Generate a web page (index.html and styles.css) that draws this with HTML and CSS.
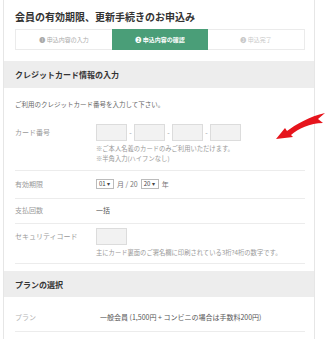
FILE: index.html
```html
<!DOCTYPE html>
<html lang="ja">
<head>
<meta charset="UTF-8">
<meta name="viewport" content="width=device-width, initial-scale=1.0">
<title>会員の有効期限、更新手続きのお申込み</title>
<link rel="stylesheet" href="styles.css">
</head>
<body>

<div class="card">
  <div class="card-top">
    <h1 class="page-title">会員の有効期限、更新手続きのお申込み</h1>
    <div class="steps">
      <div class="step step-done">❶ 申込内容の入力</div>
      <div class="step step-active">❷ 申込内容の確認</div>
      <div class="step step-next">❸ 申込完了</div>
    </div>
  </div>

  <!-- クレジットカード -->
  <h2 class="section-head">クレジットカード情報の入力</h2>
  <p class="intro">ご利用のクレジットカード番号を入力して下さい。</p>

  <div class="form-row row-card">
    <div class="form-label label-box">カード番号</div>
    <div class="form-value">
      <div class="card-inputs">
        <span class="box"></span><span class="sep">-</span>
        <span class="box"></span><span class="sep">-</span>
        <span class="box"></span><span class="sep">-</span>
        <span class="box"></span>
      </div>
      <p class="note note-first">※ご本人名義のカードのみご利用いただけます。</p>
      <p class="note">※半角入力(ハイフンなし)</p>
    </div>
  </div>

  <div class="form-row row-expiry">
    <div class="form-label">有効期限</div>
    <div class="form-value expiry">
      <span class="select">01 ▾</span>
      <span class="expiry-text">月 / 20</span>
      <span class="select">20 ▾</span>
      <span class="expiry-text">年</span>
    </div>
  </div>

  <div class="form-row row-pay">
    <div class="form-label">支払回数</div>
    <div class="form-value value-text">一括</div>
  </div>

  <div class="form-row row-code">
    <div class="form-label label-box">セキュリティコード</div>
    <div class="form-value">
      <span class="box"></span>
      <p class="note note-first">主にカード裏面のご署名欄に印刷されている3桁?4桁の数字です。</p>
    </div>
  </div>

  <!-- プラン -->
  <h2 class="section-head section-plan">プランの選択</h2>

  <div class="form-row row-plan">
    <div class="form-label label-light">プラン</div>
    <div class="form-value value-text plan-value">一般会員 (1,500円 + コンビニの場合は手数料200円)</div>
  </div>
</div>

<svg class="arrow" width="56" height="40" viewBox="0 0 56 40">
  <path d="M6,34 L15,23 L17,26 C25,20 40,11 55,8 L48,14 L53,18 C40,18 28,24 21,30 L23,32 Z" fill="#e6141c"/>
</svg>

</body>
</html>
```

FILE: styles.css
```css
body {
  margin: 0;
  background: white;
  color: #333;
  font-family: "Noto Sans CJK JP", "Noto Sans", sans-serif;
  position: relative;
  overflow: hidden;
}

.card {
  margin-left: 3px;
  width: 310px;
  border: 1px solid #e6e6e6;
  border-top: none;
  padding-bottom: 20px;
}

.card-top {
  padding: 10px 9px 11px 11px;
}

.page-title {
  margin: 0;
  font-size: 10px;
  line-height: 14px;
  font-weight: bold;
  color: #333;
}

.steps {
  display: flex;
  margin-top: 5px;
  height: 21px;
  border: 1px solid #ebebeb;
  box-sizing: border-box;
}

.step {
  flex: 1;
  display: flex;
  align-items: center;
  justify-content: center;
  font-size: 6px;
}

.step-done {
  color: #aaa;
}

.step-active {
  background: #4a9e78;
  color: white;
  font-weight: bold;
  margin: -1px 0;
}

.step-next {
  color: #c8c8c8;
}

.section-head {
  margin: 0;
  background: #ededed;
  height: 27px;
  padding-left: 11px;
  display: flex;
  align-items: center;
  font-size: 8px;
  font-weight: bold;
  color: #333;
}

.section-plan {
  margin-top: 7px;
  height: 26px;
}

.intro {
  margin: 11px 0 7px 11px;
  font-size: 6.5px;
  line-height: 10px;
  color: #666;
}

.form-row {
  display: flex;
  align-items: flex-start;
  margin: 0 9px 0 11px;
  border-bottom: 1px solid #ececec;
}

.form-label {
  width: 81px;
  flex-shrink: 0;
  font-size: 7px;
  line-height: 10px;
  color: #999;
}

.label-box {
  line-height: 17px;
}

.label-light {
  color: #b5b5b5;
}

.form-value {
  font-size: 6.5px;
  line-height: 10px;
  color: #555;
}

.value-text {
  font-size: 7px;
}

.row-card {
  padding: 8px 0 6px;
}

.row-expiry {
  padding: 8px 0 9px;
}

.row-pay {
  padding: 6px 0 8px;
}

.row-code {
  padding: 4px 0 5px;
}

.row-plan {
  padding: 15px 0 9px;
}

.plan-value {
  padding-left: 4px;
}

.card-inputs {
  display: flex;
  align-items: center;
}

.box {
  display: block;
  width: 31px;
  height: 17px;
  box-sizing: border-box;
  background: #f2f2f2;
  border: 1px solid #dcdcdc;
}

.sep {
  width: 7px;
  text-align: center;
  color: #999;
  font-size: 7px;
  line-height: 17px;
}

.note {
  margin: 0;
  font-size: 6.3px;
  line-height: 10px;
  color: #999;
}

.note-first {
  margin-top: 3px;
}

.expiry {
  display: flex;
  align-items: center;
  height: 10px;
}

.select {
  display: inline-flex;
  align-items: center;
  height: 10px;
  padding: 0 3px 0 2px;
  box-sizing: border-box;
  border: 1px solid #bbb;
  font-size: 6px;
  color: #444;
  background: white;
}

.expiry-text {
  font-size: 7px;
  color: #777;
  margin: 0 3px;
}

.arrow {
  position: absolute;
  left: 270px;
  top: 105px;
}
```
